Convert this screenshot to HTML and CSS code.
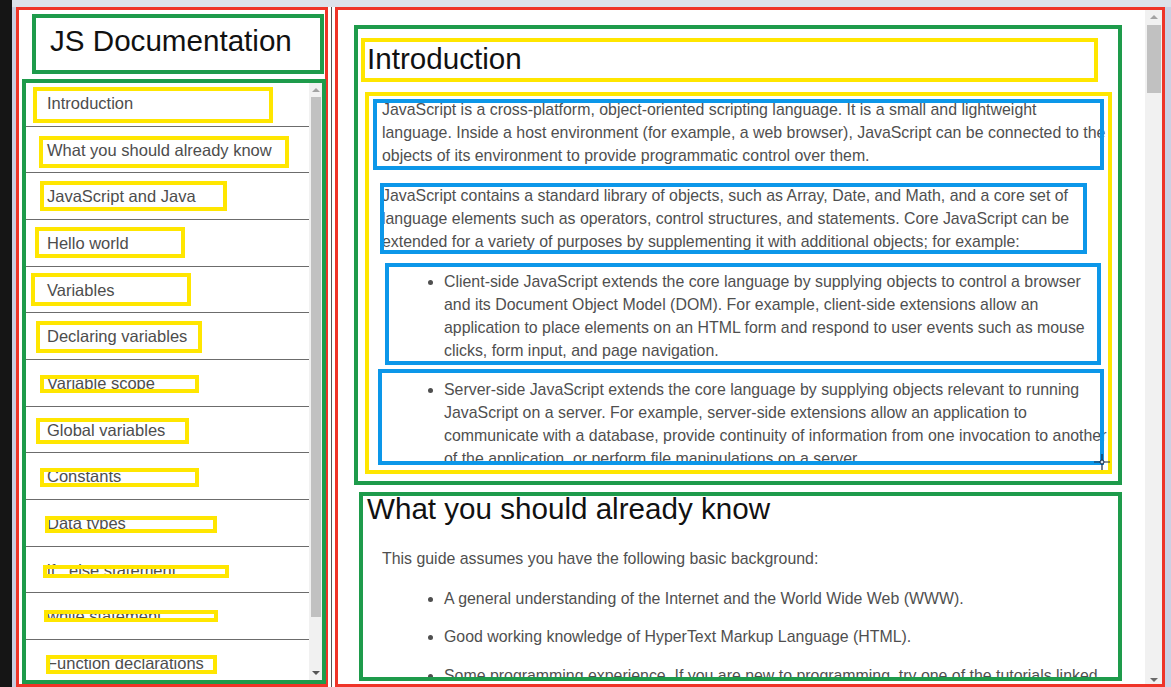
FILE: index.html
```html
<!DOCTYPE html>
<html lang="en">
<head>
<meta charset="utf-8">
<title>JS Documentation</title>
<link rel="stylesheet" href="styles.css">
</head>
<body>
<div class="screen">
  <div class="bezel"></div>
  <div class="desk">
    <div class="topstrip"></div>
    <div class="panes">
      <aside class="sidebar">
        <header class="title-box"><h1>JS Documentation</h1></header>
        <nav class="nav-box">
          <div class="navlist">
            <ul>
              <li class="y1">Introduction</li>
              <li class="y2">What you should already know</li>
              <li class="y3">JavaScript and Java</li>
              <li class="y4">Hello world</li>
              <li class="y5">Variables</li>
              <li class="y6">Declaring variables</li>
              <li class="y7">Variable scope</li>
              <li class="y8">Global variables</li>
              <li class="y9">Constants</li>
              <li class="y10">Data types</li>
              <li class="y11">if...else statement</li>
              <li class="y12">while statement</li>
              <li class="y13">Function declarations</li>
            </ul>
          </div>
          <div class="sb sb-nav">
            <div class="sb-btn"><span class="tri-up"></span></div>
            <div class="sb-track"><div class="thumb thumb-nav"></div></div>
            <div class="sb-btn sb-btn-down"><span class="tri-down"></span></div>
          </div>
        </nav>
      </aside>
      <div class="gap"></div>
      <main class="main-pane">
        <div class="doc">
          <section class="sec sec1">
            <div class="h2box"><h2>Introduction</h2></div>
            <div class="bodybox">
              <div class="clip">
                <p class="b1">JavaScript is a cross-platform, object-oriented scripting language. It is a small and lightweight language. Inside a host environment (for example, a web browser), JavaScript can be connected to the objects of its environment to provide programmatic control over them.</p>
                <p class="b2">JavaScript contains a standard library of objects, such as Array, Date, and Math, and a core set of language elements such as operators, control structures, and statements. Core JavaScript can be extended for a variety of purposes by supplementing it with additional objects; for example:</p>
                <ul>
                  <li class="b3">Client-side JavaScript extends the core language by supplying objects to control a browser and its Document Object Model (DOM). For example, client-side extensions allow an application to place elements on an HTML form and respond to user events such as mouse clicks, form input, and page navigation.</li>
                  <li class="b4">Server-side JavaScript extends the core language by supplying objects relevant to running JavaScript on a server. For example, server-side extensions allow an application to communicate with a database, provide continuity of information from one invocation to another of the application, or perform file manipulations on a server.</li>
                </ul>
              </div>
            </div>
            <svg class="cursor" width="16" height="16" viewBox="0 0 16 16" aria-hidden="true">
              <path d="M8 0V16M0 8H16" stroke="#1b2845" stroke-width="1.2" fill="none"/>
              <circle cx="8" cy="8" r="2" stroke="#1b2845" stroke-width="1" fill="#cfe6f7"/>
            </svg>
          </section>
          <section class="sec sec2">
            <h2>What you should already know</h2>
            <p>This guide assumes you have the following basic background:</p>
            <ul>
              <li>A general understanding of the Internet and the World Wide Web (WWW).</li>
              <li>Good working knowledge of HyperText Markup Language (HTML).</li>
              <li>Some programming experience. If you are new to programming, try one of the tutorials linked on the main page about JavaScript.</li>
            </ul>
          </section>
        </div>
        <div class="sb sb-main">
          <div class="sb-btn"><span class="tri-up"></span></div>
          <div class="sb-track"><div class="thumb thumb-main"></div></div>
          <div class="sb-btn sb-btn-down"><span class="tri-down dark"></span></div>
        </div>
      </main>
    </div>
  </div>
</div>
</body>
</html>
```
FILE: styles.css
```css
*, *::before, *::after { box-sizing: border-box; }
html, body { margin: 0; padding: 0; }
body {
  font-family: "Liberation Sans", Arial, sans-serif;
  background: #dfe3eb;
}
.screen { display: flex; width: 1171px; height: 687px; overflow: hidden; }
.bezel { width: 12px; flex: none; background: #151515; }
.desk { flex: 1; display: flex; flex-direction: column; }
.topstrip { height: 7px; flex: none; background: #dde2ea; }
.panes {
  flex: 1;
  display: flex;
  background: #fff;
  border-left: 4px solid #c9cde0;
  border-right: 6px solid #cbd1e4;
}

/* ---------- sidebar ---------- */
.sidebar {
  width: 312px;
  height: 680px;
  flex: none;
  border: 3px solid #ef3428;
  display: flex;
  flex-direction: column;
}
.title-box {
  margin: 4px 1px 0 13px;
  height: 60px;
  border: 4px solid #1e9b4b;
  padding: 5.6px 0 0 14px;
}
.title-box h1 {
  margin: 0;
  font-size: 29.6px;
  line-height: 34px;
  font-weight: normal;
  color: #111;
}
.nav-box {
  margin: 5px 0 0 3px;
  width: 304px;
  height: 605px;
  border: 4px solid #1e9b4b;
  display: flex;
  overflow: hidden;
}
.navlist { flex: 1; overflow: hidden; }
.navlist ul { list-style: none; margin: -3px 0 0; padding: 0; }
.navlist li {
  position: relative;
  height: 46.67px;
  border-bottom: 1px solid #6c6c6c;
  padding: 14px 0 0 21px;
  font-size: 16.5px;
  line-height: 18px;
  color: #4d4d4d;
  white-space: nowrap;
}
.navlist li::after {
  content: "";
  position: absolute;
  border: 4px solid #ffe600;
}
.navlist .y1::after  { left: 7px;  top: 7px;    width: 240px; height: 36px; }
.navlist .y2::after  { left: 13px; top: 9.3px;  width: 250px; height: 32px; }
.navlist .y3::after  { left: 14px; top: 7.7px;  width: 187px; height: 30px; }
.navlist .y4::after  { left: 9px;  top: 7px;    width: 150px; height: 31px; }
.navlist .y5::after  { left: 5px;  top: 6.3px;  width: 160px; height: 33px; }
.navlist .y6::after  { left: 10px; top: 7.7px;  width: 166px; height: 32px; }
.navlist .y7::after  { left: 14px; top: 15px;   width: 159px; height: 18px; }
.navlist .y8::after  { left: 10px; top: 11.3px; width: 153px; height: 26px; }
.navlist .y9::after  { left: 14px; top: 14.7px; width: 159px; height: 19px; }
.navlist .y10::after { left: 19px; top: 16px;   width: 172px; height: 17px; }
.navlist .y11::after { left: 17px; top: 18.3px; width: 186px; height: 13px; }
.navlist .y12::after { left: 18px; top: 16.7px; width: 174px; height: 12px; }
.navlist .y13::after { left: 20px; top: 15px;   width: 171px; height: 19px; }

/* ---------- scrollbars ---------- */
.sb { flex: none; display: flex; flex-direction: column; background: #f1f1f1; }
.sb-nav { width: 13px; }
.sb-main { width: 17px; }
.sb-btn { height: 14px; flex: none; display: flex; align-items: center; justify-content: center; }
.sb-main .sb-btn-down { align-items: flex-end; padding-bottom: 2px; }
.tri-up {
  width: 0; height: 0;
  border-left: 4px solid transparent;
  border-right: 4px solid transparent;
  border-bottom: 4px solid #a3a3a3;
}
.tri-down {
  width: 0; height: 0;
  border-left: 4px solid transparent;
  border-right: 4px solid transparent;
  border-top: 4px solid #555;
}
.tri-down.dark { border-top-color: #6a6a6a; }
.sb-track { flex: 1; }
.thumb { background: #c1c1c1; }
.thumb-nav { height: 520px; margin: 0 1px 0 2px; }
.thumb-main { height: 68px; margin: 1px 1px 0 2px; }

/* ---------- gap between panes ---------- */
.gap { width: 7px; flex: none; display: flex; justify-content: center; }
.gap::before { content: ""; width: 1px; background: #555; }

/* ---------- main pane ---------- */
.main-pane {
  width: 830px;
  height: 680px;
  flex: none;
  border: 3px solid #ef3428;
  display: flex;
}
.doc { flex: 1; overflow: hidden; color: #4f4f4f; font-size: 15.9px; line-height: 23px; }
.doc h2 {
  margin: 0;
  font-size: 29.6px;
  line-height: 34px;
  font-weight: normal;
  color: #111;
}
.sec { border: 4px solid #1e9b4b; }
.sec1 { position: relative; margin: 15px 23px 0 16px; height: 460px; }
.h2box {
  margin: 9px 20px 0 3px;
  height: 44px;
  border: 4px solid #ffe600;
  padding-left: 2px;
}
.bodybox {
  margin: 10px 6px 0 7px;
  height: 382px;
  border: 4px solid #ffe600;
}
.clip {
  position: relative;
  height: 369px;
  overflow: hidden;
  padding: 1.7px 0 0 13px;
}
.clip p { margin: 0 -1px 17px 0; position: relative; }
.clip ul { margin: 0 -1px 0 0; padding-left: 62px; }
.clip li { position: relative; margin-bottom: 16px; }
.b1::after, .b2::after, .b3::after, .b4::after {
  content: "";
  position: absolute;
  border: 4px solid #0c97e9;
}
.b1::after { left: -9px;  top: 1.3px;  right: 5px;  bottom: -3.3px; }
.b2::after { left: -2px;  top: -0.7px; right: 22px; bottom: -1.3px; }
.b3::after { left: -59px; top: -6.7px; right: 8px;  bottom: -3.3px; }
.b4::after { left: -66px; top: -8.7px; right: 5px;  bottom: 4.7px; }
.cursor { position: absolute; left: 736px; top: 425px; }

.sec2 { margin: 7px 23px 0 21px; height: 189px; overflow: hidden; }
.sec2 h2 { margin-top: -4px; padding-left: 4px; }
.sec2 p { margin: 20.7px 0 0; padding-left: 19px; }
.sec2 ul { margin: 17px 0 0; padding-left: 81px; }
.sec2 li { margin-bottom: 15.5px; }
```
